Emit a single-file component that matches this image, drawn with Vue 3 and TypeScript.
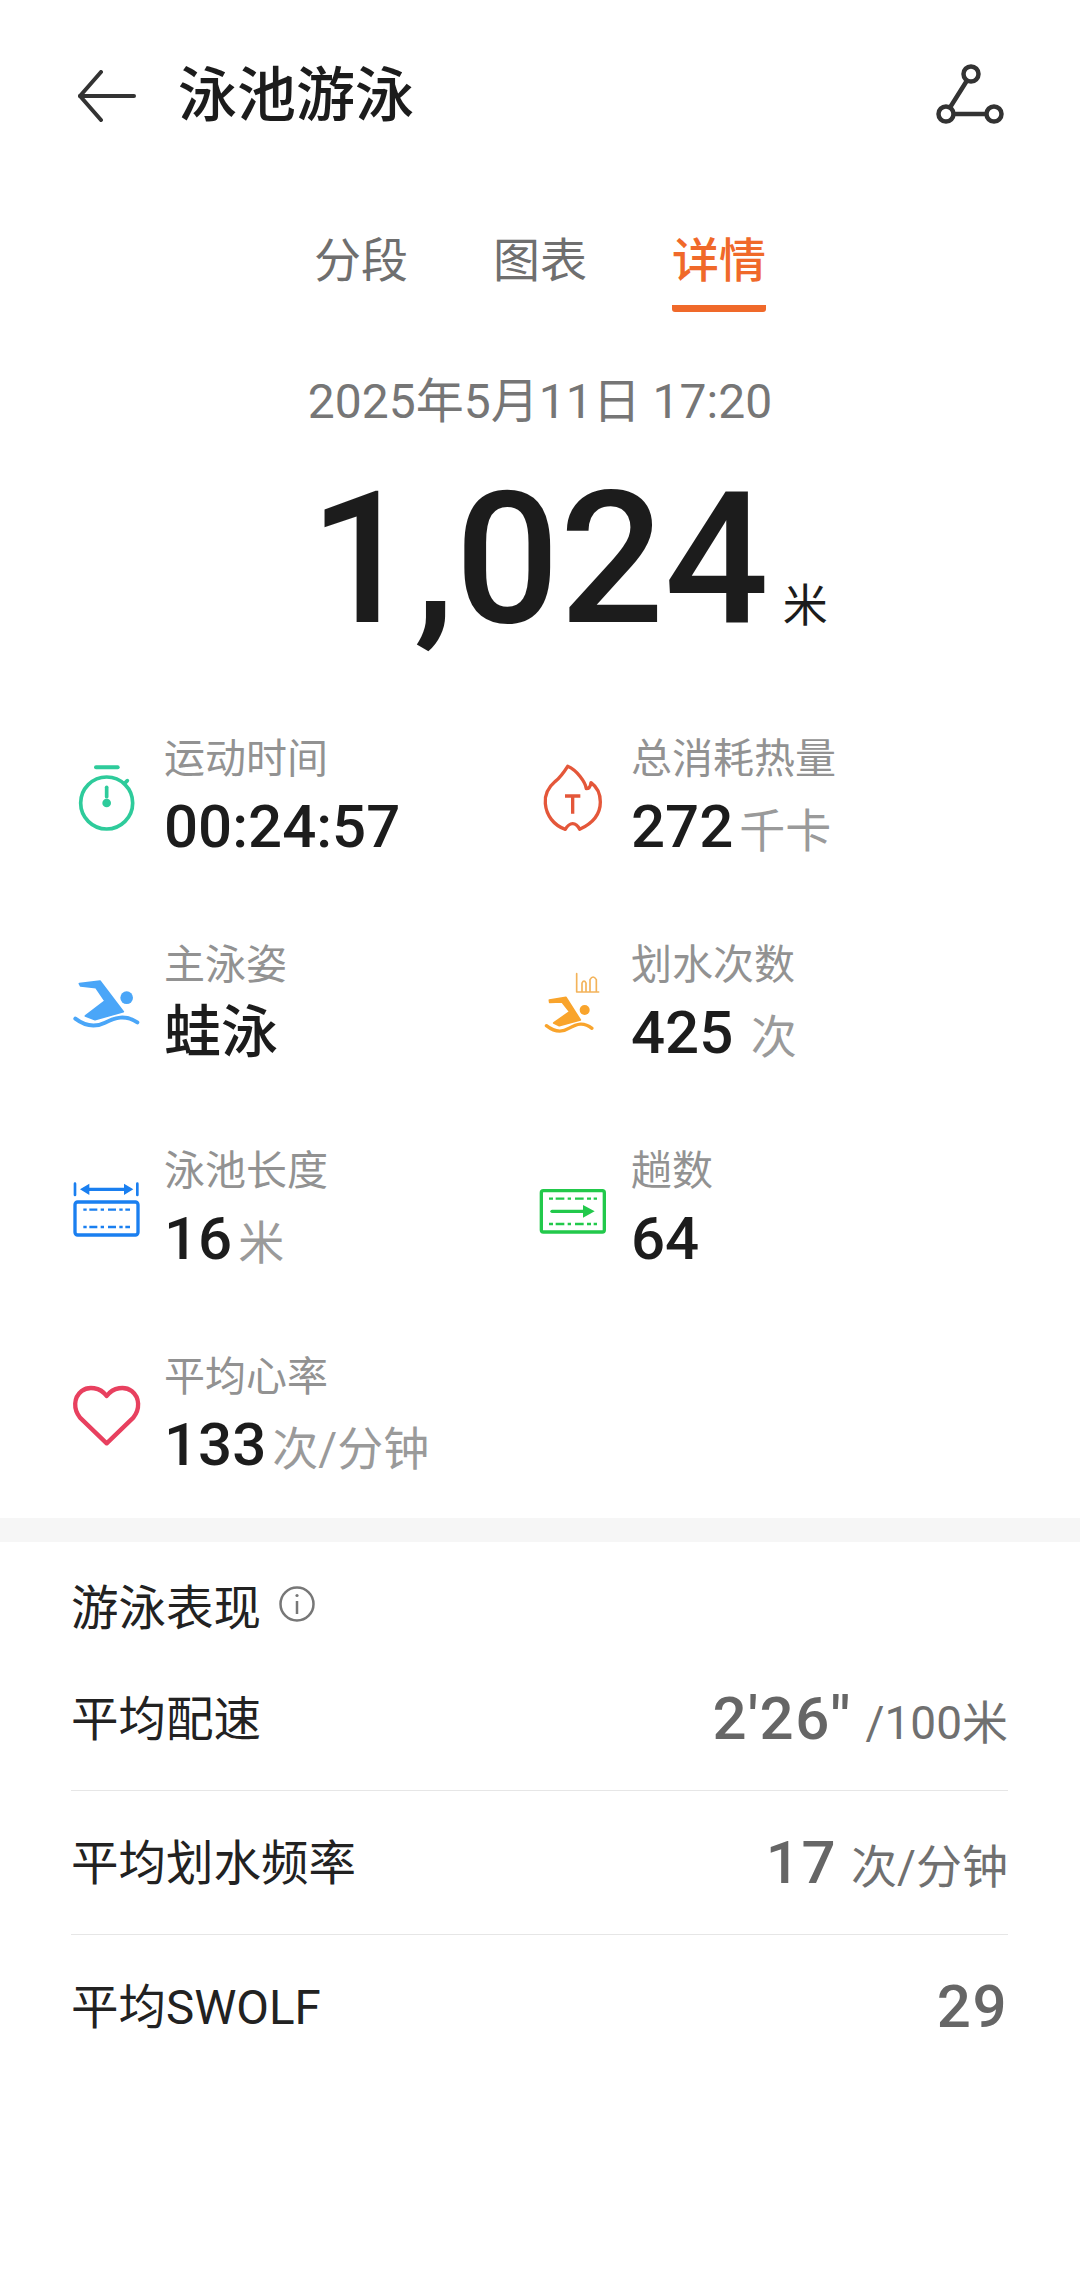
<script setup lang="ts">
interface Stat {
  icon: string;
  box: string;
  label: string;
  value: string;
  unit?: string;
  cjk?: boolean;
}

const tabs = ['分段', '图表', '详情'];
const activeTab = '详情';

const stats: Stat[] = [
  { icon: 'timer', box: '60 93 240 240', label: '运动时间', value: '00:24:57' },
  { icon: 'flame', box: '60 93 240 240', label: '总消耗热量', value: '272', unit: '千卡' },
  { icon: 'swim', box: '60 24 240 240', label: '主泳姿', value: '蛙泳', cjk: true },
  { icon: 'strokes', box: '60 24 240 240', label: '划水次数', value: '425', unit: ' 次' },
  { icon: 'length', box: '60 42 240 240', label: '泳池长度', value: '16', unit: '米' },
  { icon: 'laps', box: '60 42 240 240', label: '趟数', value: '64' },
  { icon: 'heart', box: '60 30 240 240', label: '平均心率', value: '133', unit: '次/分钟' }
];

const perf = [
  { label: '平均配速', value: `2'26''`, unit: '/100米' },
  { label: '平均划水频率', value: '17', unit: '次/分钟' },
  { label: '平均SWOLF', value: '29', unit: '' }
];
</script>

<template>
  <div class="page">
    <header class="top-bar">
      <svg class="back" width="60" height="52" viewBox="0 0 60 52" fill="none" stroke="#333" stroke-width="4" stroke-linecap="round" stroke-linejoin="round">
        <path d="M24 2 L3 26 L24 50" />
        <path d="M3 26 H57" />
      </svg>
      <h1 class="title">泳池游泳</h1>
      <svg class="route" width="70" height="64" viewBox="0 0 70 64" fill="none" stroke="#333" stroke-width="4.5">
        <circle cx="36" cy="10" r="7.5" />
        <circle cx="11" cy="50" r="7.5" />
        <circle cx="59" cy="50" r="7.5" />
        <path d="M32 16.5 L15 43.5 M18.5 50 H51.5" />
      </svg>
    </header>

    <nav class="tabs">
      <div v-for="t in tabs" :key="t" class="tab" :class="{ active: t === activeTab }">{{ t }}</div>
    </nav>

    <div class="date">2025年5月11日 17:20</div>
    <div class="distance"><span class="distance-num">1,024</span><span class="distance-unit">米</span></div>

    <section class="stats">
      <div v-for="s in stats" :key="s.label" class="stat">
        <svg class="stat-icon" width="80" height="80" :viewBox="s.box" fill="none" stroke-linecap="round" stroke-linejoin="round">
          <g v-if="s.icon === 'timer'" stroke="#2ecb9b">
            <path d="M138 136 H203" stroke-width="12" />
            <circle cx="170" cy="243" r="78" stroke-width="11" />
            <path d="M224 184 L232 176" stroke-width="11" />
            <path d="M170 196 V224" stroke-width="11" />
            <circle cx="170" cy="243" r="13" fill="#2ecb9b" stroke="none" />
          </g>
          <g v-else-if="s.icon === 'flame'" stroke="#e4573a" stroke-width="10">
            <path d="M152 133 C140 152 130 166 115 178 C95 195 82 215 85 245 C88 280 110 310 145 322 C150 312 160 305 167 305 C175 305 183 312 188 322 C225 305 250 280 250 240 C250 215 240 195 222 182 C220 195 215 200 208 200 C205 180 180 145 152 133 Z" />
            <path d="M144 222 H190 M167 222 V275" stroke-linecap="butt" />
          </g>
          <g v-else-if="s.icon === 'swim'" fill="#4aa6f8">
            <path d="M88 98 L150 90 L220 182 L135 206 L106 195 L165 150 L138 110 L92 105 Z" stroke="#4aa6f8" stroke-width="5" />
            <circle cx="230" cy="140" r="19" />
            <path d="M76 203 C105 225 135 230 165 215 C195 200 225 190 262 214" fill="none" stroke="#4aa6f8" stroke-width="12" />
          </g>
          <g v-else-if="s.icon === 'strokes'" fill="#f9a42c">
            <path d="M97 147 L147 139 L190 207 L127 224 L110 216 L158 182 L135 153 L98 154 Z" stroke="#f9a42c" stroke-width="5" />
            <circle cx="203" cy="177" r="15" />
            <path d="M88 224 C115 245 135 245 155 232 C180 218 200 212 225 232" fill="none" stroke="#f9a42c" stroke-width="10" />
            <path d="M179 68 V123 H245 M195 121 V96 Q201 84 207 96 V121 M219 121 V86 Q228 70 238 86 V121" fill="none" stroke="#f3b35a" stroke-width="5" />
          </g>
          <g v-else-if="s.icon === 'length'" stroke="#1a7ff0">
            <path d="M75 98 V132 M262 98 V132" stroke-width="8" />
            <path d="M110 115 H230" stroke-width="10" />
            <path d="M90 115 L118 98 V132 Z M250 115 L222 98 V132 Z" fill="#1a7ff0" stroke="none" />
            <rect x="75" y="153" width="189" height="99" rx="8" stroke-width="10" />
            <path d="M100 176 H240 M100 228 H240" stroke-width="7" stroke-dasharray="10 8 24 10 10 12 24 10" stroke-linecap="butt" />
          </g>
          <g v-else-if="s.icon === 'laps'" stroke="#22c94b">
            <rect x="73" y="119" width="189" height="124" rx="6" stroke-width="10" />
            <path d="M96 143 H240 M96 219 H240" stroke-width="7" stroke-dasharray="12 8 26 10 10 12 26 10" stroke-linecap="butt" />
            <path d="M105 181 H205" stroke-width="10" />
            <path d="M198 162 L233 181 L198 200 Z" fill="#22c94b" stroke="none" />
          </g>
          <g v-else stroke="#e8405f" stroke-width="13">
            <path d="M170 105 C150 78 115 75 95 90 C70 110 70 145 90 170 L170 247 L250 170 C270 145 270 110 245 90 C225 75 190 78 170 105 Z" />
          </g>
        </svg>
        <div class="stat-text">
          <div class="stat-label">{{ s.label }}</div>
          <div class="stat-value" :class="{ cjk: s.cjk }">{{ s.value }}<span v-if="s.unit" class="stat-unit">{{ s.unit }}</span></div>
        </div>
      </div>
    </section>

    <div class="band"></div>

    <section class="perf">
      <div class="perf-head">
        <span>游泳表现</span>
        <svg width="38" height="38" viewBox="0 0 38 38" fill="none" stroke="#777" stroke-width="2.5">
          <circle cx="19" cy="19" r="16.5" />
          <path d="M19 16 V29" />
          <circle cx="19" cy="10.5" r="1.6" fill="#777" stroke="none" />
        </svg>
      </div>
      <div v-for="p in perf" :key="p.label" class="perf-row">
        <span class="perf-label">{{ p.label }}</span>
        <span class="perf-value">{{ p.value }}<span v-if="p.unit" class="perf-unit">{{ p.unit }}</span></span>
      </div>
    </section>
  </div>
</template>

<style scoped>
.page {
  width: 1080px;
  height: 2278px;
  background: #fff;
  font-family: Roboto, "Noto Sans CJK SC", sans-serif;
  color: #1c1c1c;
  overflow: hidden;
}

.top-bar {
  height: 192px;
  display: flex;
  align-items: center;
  padding: 0 75px 0 77px;
}

.back {
  flex-shrink: 0;
}

.title {
  margin: 0 0 0 41px;
  flex: 1;
  font-size: 59px;
  font-weight: 500;
  line-height: 80px;
}

.tabs {
  height: 120px;
  display: flex;
  justify-content: center;
  gap: 85px;
}

.tab {
  height: 120px;
  line-height: 138px;
  font-size: 47px;
  color: #6f6f6f;
  box-sizing: border-box;
}

.tab.active {
  color: #f0692a;
  font-weight: 500;
  border-bottom: 7px solid #f0692a;
  border-radius: 0 0 3px 3px;
}

.date {
  margin-top: 57px;
  height: 66px;
  line-height: 66px;
  text-align: center;
  font-size: 48px;
  color: #767676;
}

.distance {
  height: 236px;
  margin-top: 19px;
  margin-left: 57px;
  display: flex;
  justify-content: center;
  align-items: baseline;
  line-height: 210px;
}

.distance-num {
  font-size: 184px;
  font-weight: 500;
  color: #1c1c1c;
}

.distance-unit {
  margin-left: 14px;
  font-size: 45px;
}

.stats {
  padding: 0 0 4px 70px;
  display: grid;
  grid-template-columns: 467px 470px;
  grid-auto-rows: 206px;
}

.stat {
  display: flex;
  align-items: center;
  gap: 14px;
}

.stat-icon {
  flex-shrink: 0;
}

.stat-label {
  font-size: 41px;
  line-height: 56px;
  color: #929292;
}

.stat-value {
  margin-top: 12px;
  font-size: 60px;
  font-weight: 500;
  line-height: 56px;
  color: #1c1c1c;
  white-space: pre;
}

.stat-value.cjk {
  font-size: 57px;
}

.stat-unit {
  margin-left: 6px;
  font-size: 46px;
  font-weight: 400;
  line-height: 1;
  color: #9a9a9a;
}

.band {
  height: 24px;
  background: #f6f6f6;
}

.perf {
  padding: 0 72px 0 71px;
}

.perf-head {
  height: 80px;
  margin: 22px 0 3px;
  display: flex;
  align-items: center;
  gap: 17px;
  font-size: 47.5px;
  color: #222;
}

.perf-row {
  height: 143px;
  display: flex;
  align-items: center;
  justify-content: space-between;
  border-bottom: 1px solid #e6e6e6;
}

.perf-row:last-child {
  border-bottom: none;
}

.perf-label {
  padding-bottom: 6px;
  font-size: 47.5px;
  color: #222;
}

.perf-value {
  font-size: 60px;
  font-weight: 500;
  color: #666;
  letter-spacing: 1.5px;
}

.perf-unit {
  margin-left: 14px;
  font-size: 46px;
  font-weight: 400;
  color: #707070;
  letter-spacing: 0;
}
</style>
